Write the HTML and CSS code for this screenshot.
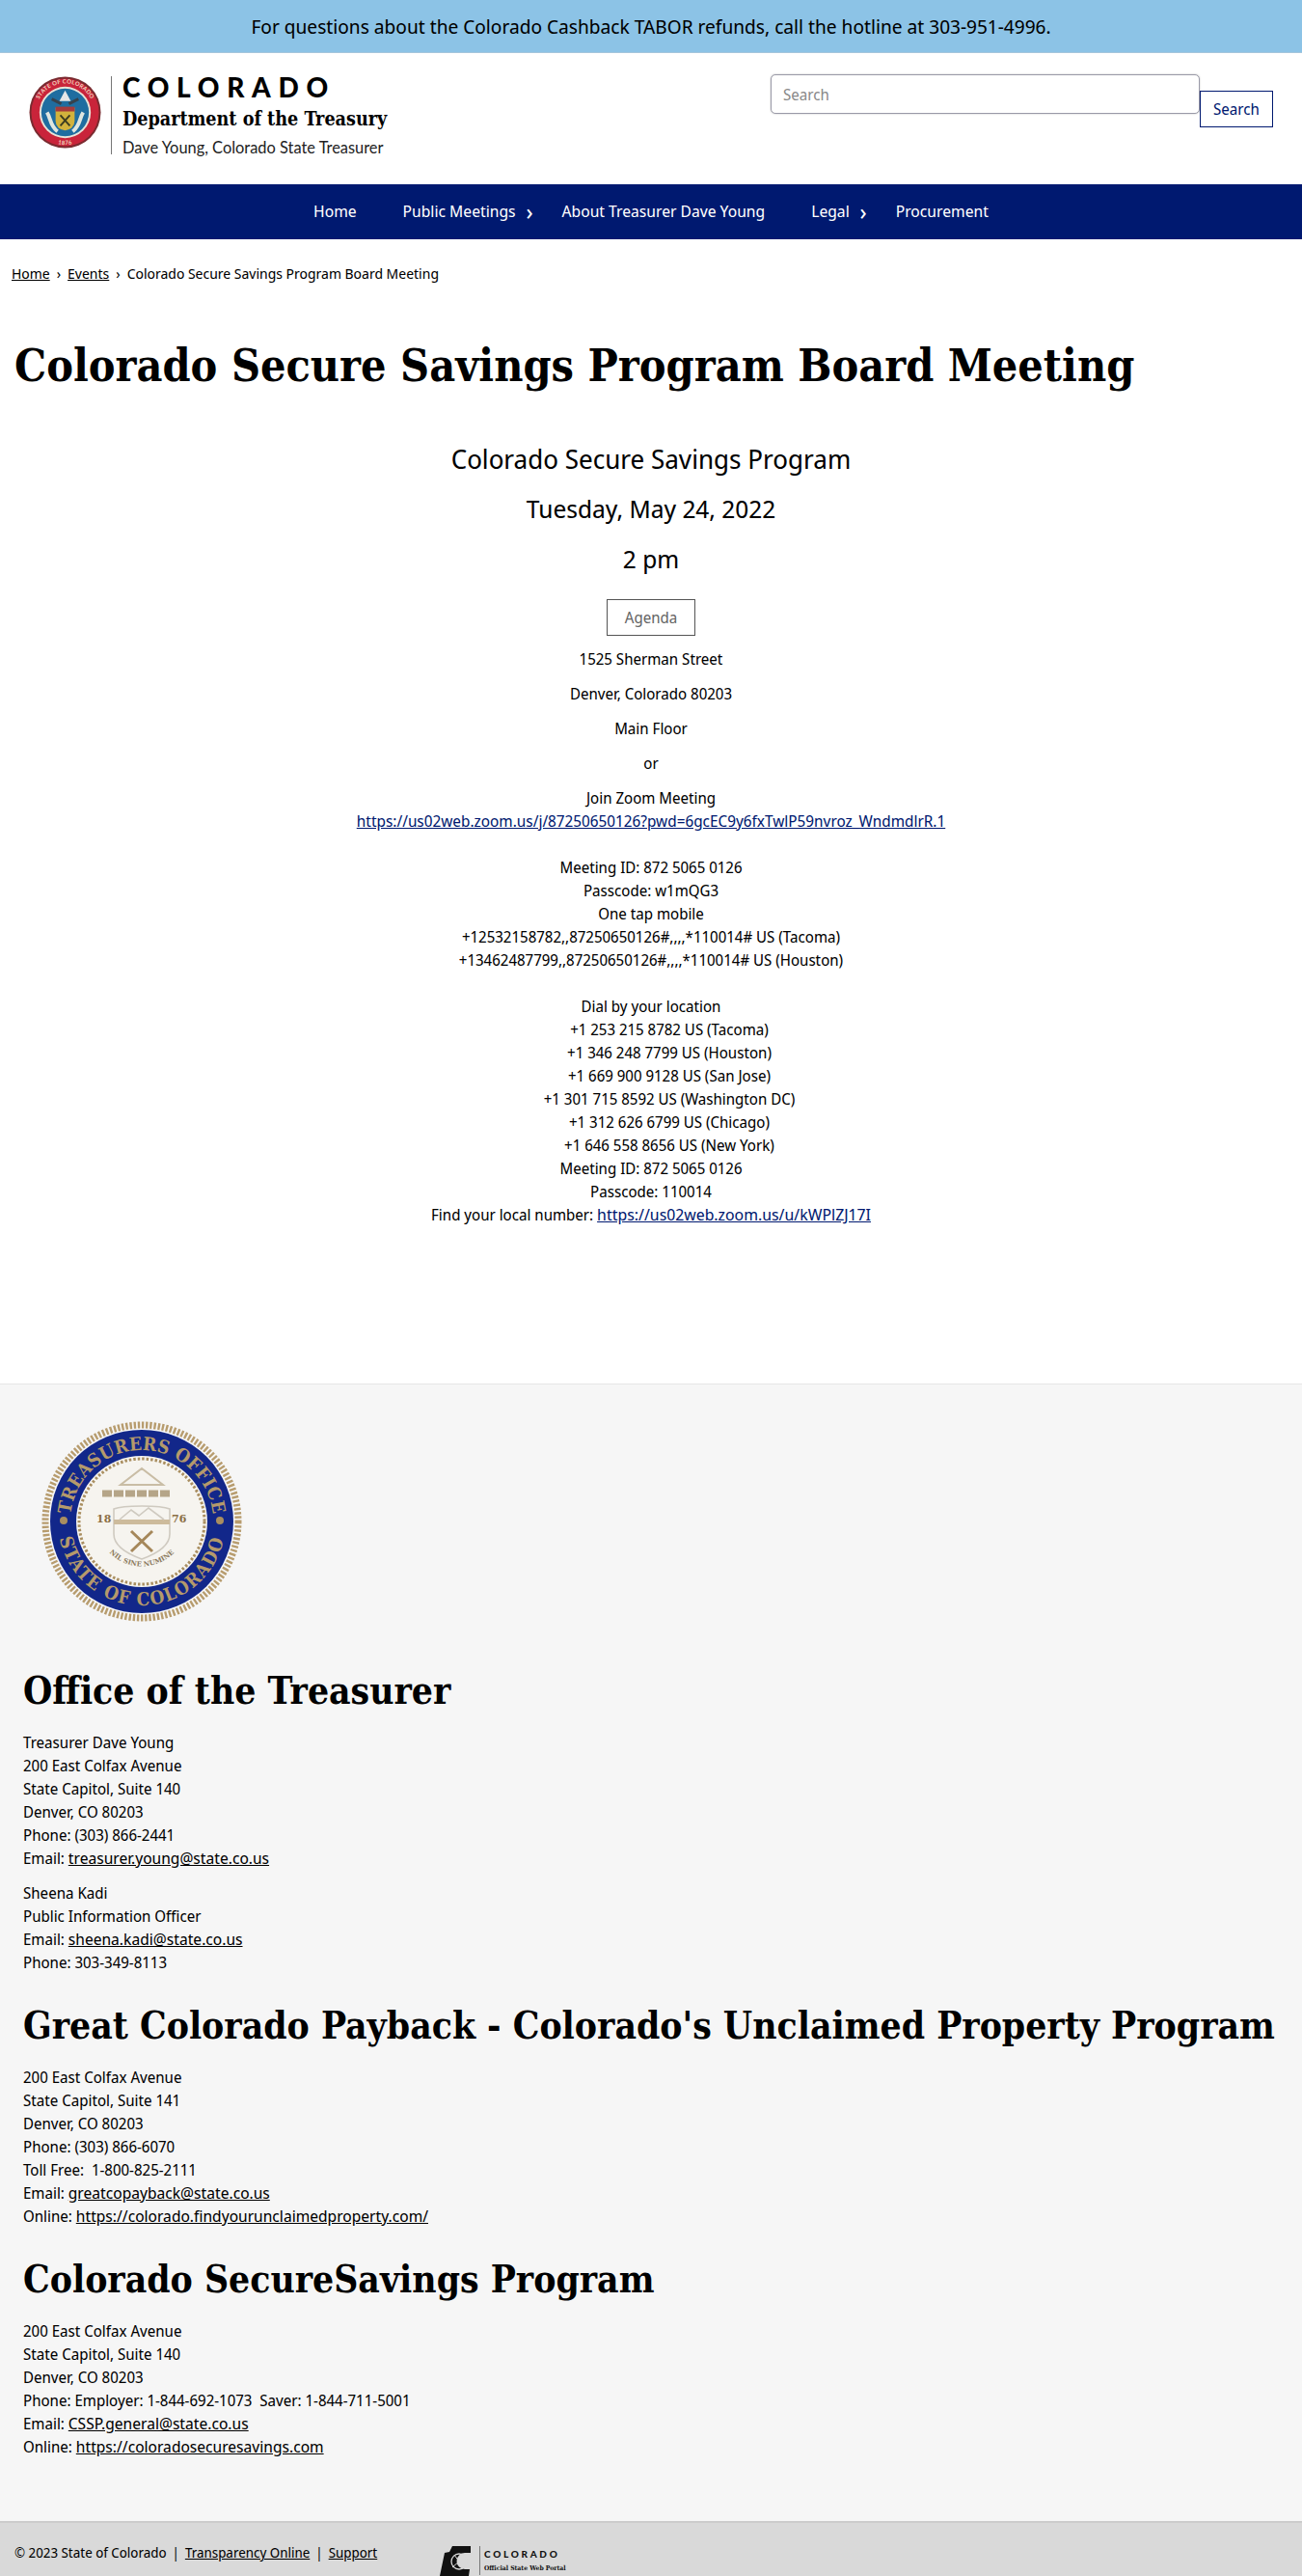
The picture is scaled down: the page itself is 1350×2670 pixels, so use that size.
FILE: index.html
```html
<!DOCTYPE html>
<html lang="en">
<head>
<meta charset="utf-8">
<title>Colorado Secure Savings Program Board Meeting</title>
<link rel="stylesheet" href="styles.css">
</head>
<body>
<div class="alert">For questions about the Colorado Cashback TABOR refunds, call the hotline at 303-951-4996.</div>
<header class="masthead">
  <a class="brand" href="#">
    <svg class="state-seal" viewBox="0 0 76 76" aria-hidden="true">
      <defs>
        <path id="st-top" d="M7.500 38a30.500 30.500 0 0 1 61 0"/>
        <path id="st-bot" d="M4 38a34 34 0 0 0 68 0"/>
      </defs>
      <circle cx="38" cy="38" r="37.500" fill="#7a2b30"/>
      <circle cx="38" cy="38" r="35.500" fill="#c9243a"/>
      <circle cx="38" cy="38" r="27" fill="#e8e4d8"/>
      <circle cx="38" cy="38" r="25" fill="#1f6da0"/>
      <text class="st-ring"><textPath href="#st-top" startOffset="50%" text-anchor="middle">STATE OF COLORADO</textPath></text>
      <text class="st-ring"><textPath href="#st-bot" startOffset="50%" text-anchor="middle">1876</textPath></text>
      <path d="M38 15l6 11H32z" fill="#e6e6e6"/>
      <path d="M24 24l10 5M52 24l-10 5" stroke="#36424d" stroke-width="3"/>
      <path d="M28 33h20v14a10 10 0 0 1-20 0z" fill="#d2b23c"/>
      <rect x="28" y="32" width="20" height="5" fill="#a63a3c"/>
      <path d="M33 41l10 11M43 41L33 52" stroke="#3c3c20" stroke-width="2"/>
      <path d="M19 38c4 6 3 14 11 20M57 38c-4 6-3 14-11 20" stroke="#dfe6e0" stroke-width="4" fill="none"/>
    </svg>
    <span class="brand-rule"></span>
    <span class="brand-text">
      <span class="brand-state">COLORADO</span>
      <span class="brand-dept">Department of the Treasury</span>
      <span class="brand-name">Dave Young, Colorado State Treasurer</span>
    </span>
  </a>
  <form class="search">
    <input class="search-input" type="text" placeholder="Search">
    <button class="search-btn" type="button">Search</button>
  </form>
</header>
<nav class="mainnav">
  <a class="nav-item" href="#">Home</a>
  <a class="nav-item nav-caret" href="#">Public Meetings</a>
  <a class="nav-item" href="#">About Treasurer Dave Young</a>
  <a class="nav-item nav-caret" href="#">Legal</a>
  <a class="nav-item" href="#">Procurement</a>
</nav>
<div class="crumbs"><a href="#">Home</a><span class="sep">›</span><a href="#">Events</a><span class="sep">›</span>Colorado Secure Savings Program Board Meeting</div>
<main>
  <h1 class="page-title">Colorado Secure Savings Program Board Meeting</h1>
  <div class="event">
    <h2 class="event-h">Colorado Secure Savings Program</h2>
    <h3 class="event-h">Tuesday, May 24, 2022</h3>
    <h4 class="event-h">2 pm</h4>
    <a class="agenda" href="#">Agenda</a>
    <p>1525 Sherman Street</p>
    <p>Denver, Colorado 80203</p>
    <p>Main Floor</p>
    <p>or</p>
    <p>Join Zoom Meeting<br><a class="blue" href="#">https://us02web.zoom.us/j/87250650126?pwd=6gcEC9y6fxTwlP59nvroz_WndmdlrR.1</a><br><br>Meeting ID: 872 5065 0126<br>Passcode: w1mQG3<br>One tap mobile<br>+12532158782,,87250650126#,,,,*110014# US (Tacoma)<br>+13462487799,,87250650126#,,,,*110014# US (Houston)<br><br>Dial by your location<br><span class="dial">+1 253 215 8782 US (Tacoma)</span><br><span class="dial">+1 346 248 7799 US (Houston)</span><br><span class="dial">+1 669 900 9128 US (San Jose)</span><br><span class="dial">+1 301 715 8592 US (Washington DC)</span><br><span class="dial">+1 312 626 6799 US (Chicago)</span><br><span class="dial">+1 646 558 8656 US (New York)</span><br>Meeting ID: 872 5065 0126<br>Passcode: 110014<br>Find your local number: <a class="blue wide" href="#">https://us02web.zoom.us/u/kWPlZJ17I</a></p>
  </div>
</main>
<footer>
  <div class="foot-main">
    <svg class="treasury-seal" viewBox="0 0 210 210" aria-hidden="true">
      <defs>
        <path id="arc-top" d="M31 105a74 74 0 0 1 148 0"/>
        <path id="arc-bot" d="M18 105a87 87 0 0 0 174 0"/>
        <path id="arc-motto" d="M60 118a47 47 0 0 0 90 0"/>
      </defs>
      <circle cx="105" cy="105" r="100" fill="none" stroke="#b79c6e" stroke-width="7" stroke-dasharray="2.400 1.800"/>
      <circle cx="105" cy="105" r="95" fill="#12278a"/>
      <circle cx="105" cy="105" r="68" fill="#f6f4ef"/>
      <circle cx="105" cy="105" r="65" fill="none" stroke="#a98e60" stroke-width="3" stroke-dasharray="2.500 2"/>
      <text class="seal-band"><textPath href="#arc-top" startOffset="50%" text-anchor="middle">TREASURERS OFFICE</textPath></text>
      <text class="seal-band wide"><textPath href="#arc-bot" startOffset="50%" text-anchor="middle">STATE OF COLORADO</textPath></text>
      <circle cx="24" cy="104" r="4" fill="#a98e60"/><circle cx="186" cy="104" r="4" fill="#a98e60"/>
      <path d="M105 50l22 17H83z" fill="none" stroke="#c9bda5" stroke-width="2"/>
      <path d="M64 76h72" stroke="#b5a588" stroke-width="7" stroke-dasharray="10 2"/>
      <path d="M76 92c10-4 48-4 58 0v26c0 14-18 22-29 26-11-4-29-12-29-26z" fill="none" stroke="#cfcac0" stroke-width="1.600"/>
      <rect x="76" y="103" width="58" height="5" fill="#cdbb9c"/>
      <path d="M82 103l12-10 8 6 10-8 16 12" fill="none" stroke="#cfcac0" stroke-width="1.600"/>
      <path d="M94 115l22 21M116 115L94 136" stroke="#a5875a" stroke-width="3"/>
      <text class="seal-year" x="58" y="106">18</text><text class="seal-year" x="136" y="106">76</text>
      <text class="seal-motto"><textPath href="#arc-motto" startOffset="50%" text-anchor="middle">NIL SINE NUMINE</textPath></text>
    </svg>
    <h2 class="foot-h first">Office of the Treasurer</h2>
    <p>Treasurer Dave Young<br>200 East Colfax Avenue<br>State Capitol, Suite 140<br>Denver, CO 80203<br>Phone: (303) 866-2441<br>Email: <a href="#">treasurer.young@state.co.us</a></p>
    <p>Sheena Kadi<br>Public Information Officer<br>Email: <a href="#">sheena.kadi@state.co.us</a><br>Phone: 303-349-8113</p>
    <h2 class="foot-h">Great Colorado Payback - Colorado's Unclaimed Property Program</h2>
    <p>200 East Colfax Avenue<br>State Capitol, Suite 141<br>Denver, CO 80203<br>Phone: (303) 866-6070<br>Toll Free:&nbsp; 1-800-825-2111<br>Email: <a href="#">greatcopayback@state.co.us</a><br>Online: <a href="#">https://colorado.findyourunclaimedproperty.com/</a></p>
    <h2 class="foot-h">Colorado SecureSavings Program</h2>
    <p>200 East Colfax Avenue<br>State Capitol, Suite 140<br>Denver, CO 80203<br>Phone: Employer: 1-844-692-1073&nbsp; Saver: 1-844-711-5001<br>Email: <a href="#">CSSP.general@state.co.us</a><br>Online: <a href="#">https://coloradosecuresavings.com</a></p>
  </div>
  <div class="foot-bar">
    <div class="legal">© 2023 State of Colorado<span class="pipe">|</span><a href="#">Transparency Online</a><span class="pipe">|</span><a href="#">Support</a></div>
    <a class="portal" href="#">
      <svg class="portal-mark" viewBox="0 0 36 32" aria-hidden="true">
        <path d="M0 31L5 7l5-1 3-6h19v7h-6a8.500 8.500 0 0 0 0 17h5l-1 7H10z" fill="#111"/>
        <circle cx="20" cy="16" r="8" fill="none" stroke="#d9d9d9" stroke-width="1.300"/>
        <path d="M13 22l14-12M15 9l10 14" stroke="#d9d9d9" stroke-width="1"/>
      </svg>
      <span class="portal-rule"></span>
      <span class="portal-text"><span class="portal-state">COLORADO</span><span class="portal-sub">Official State Web Portal</span></span>
    </a>
  </div>
</footer>
</body>
</html>
```
FILE: styles.css
```css
* { box-sizing: border-box; }
html, body { margin: 0; padding: 0; }
body {
  font-family: "Noto Sans Display", "Noto Sans", "Lato", sans-serif;
  font-size: 16px;
  line-height: 24px;
  color: #000;
  background: #fff;
  overflow-x: hidden;
}
a { color: inherit; }

.alert {
  height: 55px;
  padding-top: 14px;
  background: #8cc3e6;
  border-bottom: 1px solid #a5c5dc;
  text-align: center;
  font-size: 20.300px;
  line-height: 27px;
}

.masthead {
  height: 136px;
  display: flex;
  justify-content: space-between;
  padding: 22px 30px 0 30px;
}
.brand { display: flex; align-items: flex-start; padding-top: 2px; text-decoration: none; color: #000; }
.state-seal { width: 75px; height: 75px; }
.brand-rule { width: 1px; height: 81px; margin: 0 11px 0 10px; background: #777; }
.brand-text { display: flex; flex-direction: column; }
.brand-state { font: 900 28px/24px "Lato", sans-serif; letter-spacing: 7.700px; margin-top: -1px; }
.brand-dept { font: bold 19.600px/24px "DejaVu Serif Condensed", "DejaVu Serif", serif; margin-top: 10px; }
.brand-name { font: 400 16.400px/20px "Lato", sans-serif; margin-top: 7px; color: #222; }

.search { display: flex; align-items: flex-start; }
.search-input {
  width: 445px;
  height: 41px;
  padding: 0 12px;
  border: 1px solid #9a9aa8;
  border-radius: 5px;
  box-shadow: 0 0 2px #bbb;
  font: 16px "Noto Sans Display", "Noto Sans", sans-serif;
  outline: none;
}
.search-input::placeholder { color: #8a8a8a; }
.search-btn {
  width: 76px;
  height: 38px;
  margin-top: 17px;
  padding: 0;
  border: 1px solid #001970;
  background: #fff;
  color: #001970;
  font: 16px "Noto Sans Display", "Noto Sans", sans-serif;
}

.mainnav {
  height: 57px;
  display: flex;
  justify-content: center;
  background: #001970;
  padding-top: 16px;
}
.nav-item {
  display: block;
  height: 24px;
  padding: 0 24px;
  color: #fff;
  font-size: 16.600px;
  text-decoration: none;
  white-space: nowrap;
}
.nav-caret { position: relative; }
.nav-caret::after {
  content: "›";
  position: absolute;
  right: 6px;
  top: 0;
  color: #fff;
  font-size: 24px;
}

.crumbs { padding: 23px 12px 0; font-size: 14.800px; line-height: 24px; height: 47px; }
.sep { margin: 0 7px; }

.page-title {
  margin: 54px 0 0;
  padding-left: 15px;
  font: bold 46.300px/60px "DejaVu Serif Condensed", "DejaVu Serif", serif;
  height: 60px;
}

.event { text-align: center; margin-top: 48px; padding-bottom: 163px; }
.event-h {
  margin: 0 0 16px;
  font-weight: 400;
  line-height: 36px;
}
h2.event-h { font-size: 27.600px; }
h3.event-h { font-size: 26px; }
h4.event-h { font-size: 26px; }
.agenda {
  display: inline-block;
  width: 92px;
  height: 38px;
  margin: 8px 0 0;
  border: 1px solid #555;
  color: #666;
  text-decoration: none;
  line-height: 36px;
}
.event p { margin: 12px 0 0; }
.blue { color: #001970; font-size: 16.300px; }
.blue.wide { font-size: 16.800px; }
.dial { padding-left: 38px; }

footer { background: #f6f6f6; border-top: 1px solid #e6e6e6; }
.foot-main { padding: 37px 24px 53px; }
.treasury-seal { display: block; width: 210px; height: 210px; margin-left: 18px; }
.foot-main p { margin: 0 0 12px; }
.foot-main a { font-size: 16.500px; }
.foot-h {
  margin: 26px 0 13px;
  font: bold 38.700px/56px "DejaVu Serif Condensed", "DejaVu Serif", serif;
  height: 56px;
  white-space: nowrap;
}
.foot-h.first { margin-top: 43px; }

.st-ring { font: bold 6px "Lato", sans-serif; fill: #f0d8c0; letter-spacing: .3px; }
.seal-band { font: bold 19px "DejaVu Serif Condensed", serif; fill: #b59a6b; letter-spacing: .2px; }
.seal-band.wide { letter-spacing: 1.400px; }
.seal-year { font: bold 11px "DejaVu Serif", serif; fill: #8b6f45; }
.seal-motto { font: bold 7px "DejaVu Serif", serif; fill: #8b7a5e; }

.foot-bar {
  height: 57px;
  background: #d9d9d9;
  border-top: 2px solid #ccc;
  display: flex;
  padding: 19px 0 0 15px;
  overflow: hidden;
}
.legal { font-size: 14.200px; line-height: 24px; white-space: nowrap; width: 441px; }
.pipe { margin: 0 6px; }
.portal { display: flex; align-items: flex-start; text-decoration: none; color: #111; margin-top: 5px; }
.portal-mark { width: 36px; height: 32px; }
.portal-rule { width: 1px; height: 30px; background: #777; margin: 0 3px 0 5px; }
.portal-text { display: flex; flex-direction: column; padding-left: 1px; }
.portal-state { font: 900 10px/12px "Lato", sans-serif; letter-spacing: 2.700px; margin-top: 2px; }
.portal-sub { font: bold 6.800px/10px "DejaVu Serif Condensed", serif; margin-top: 4px; }
```
